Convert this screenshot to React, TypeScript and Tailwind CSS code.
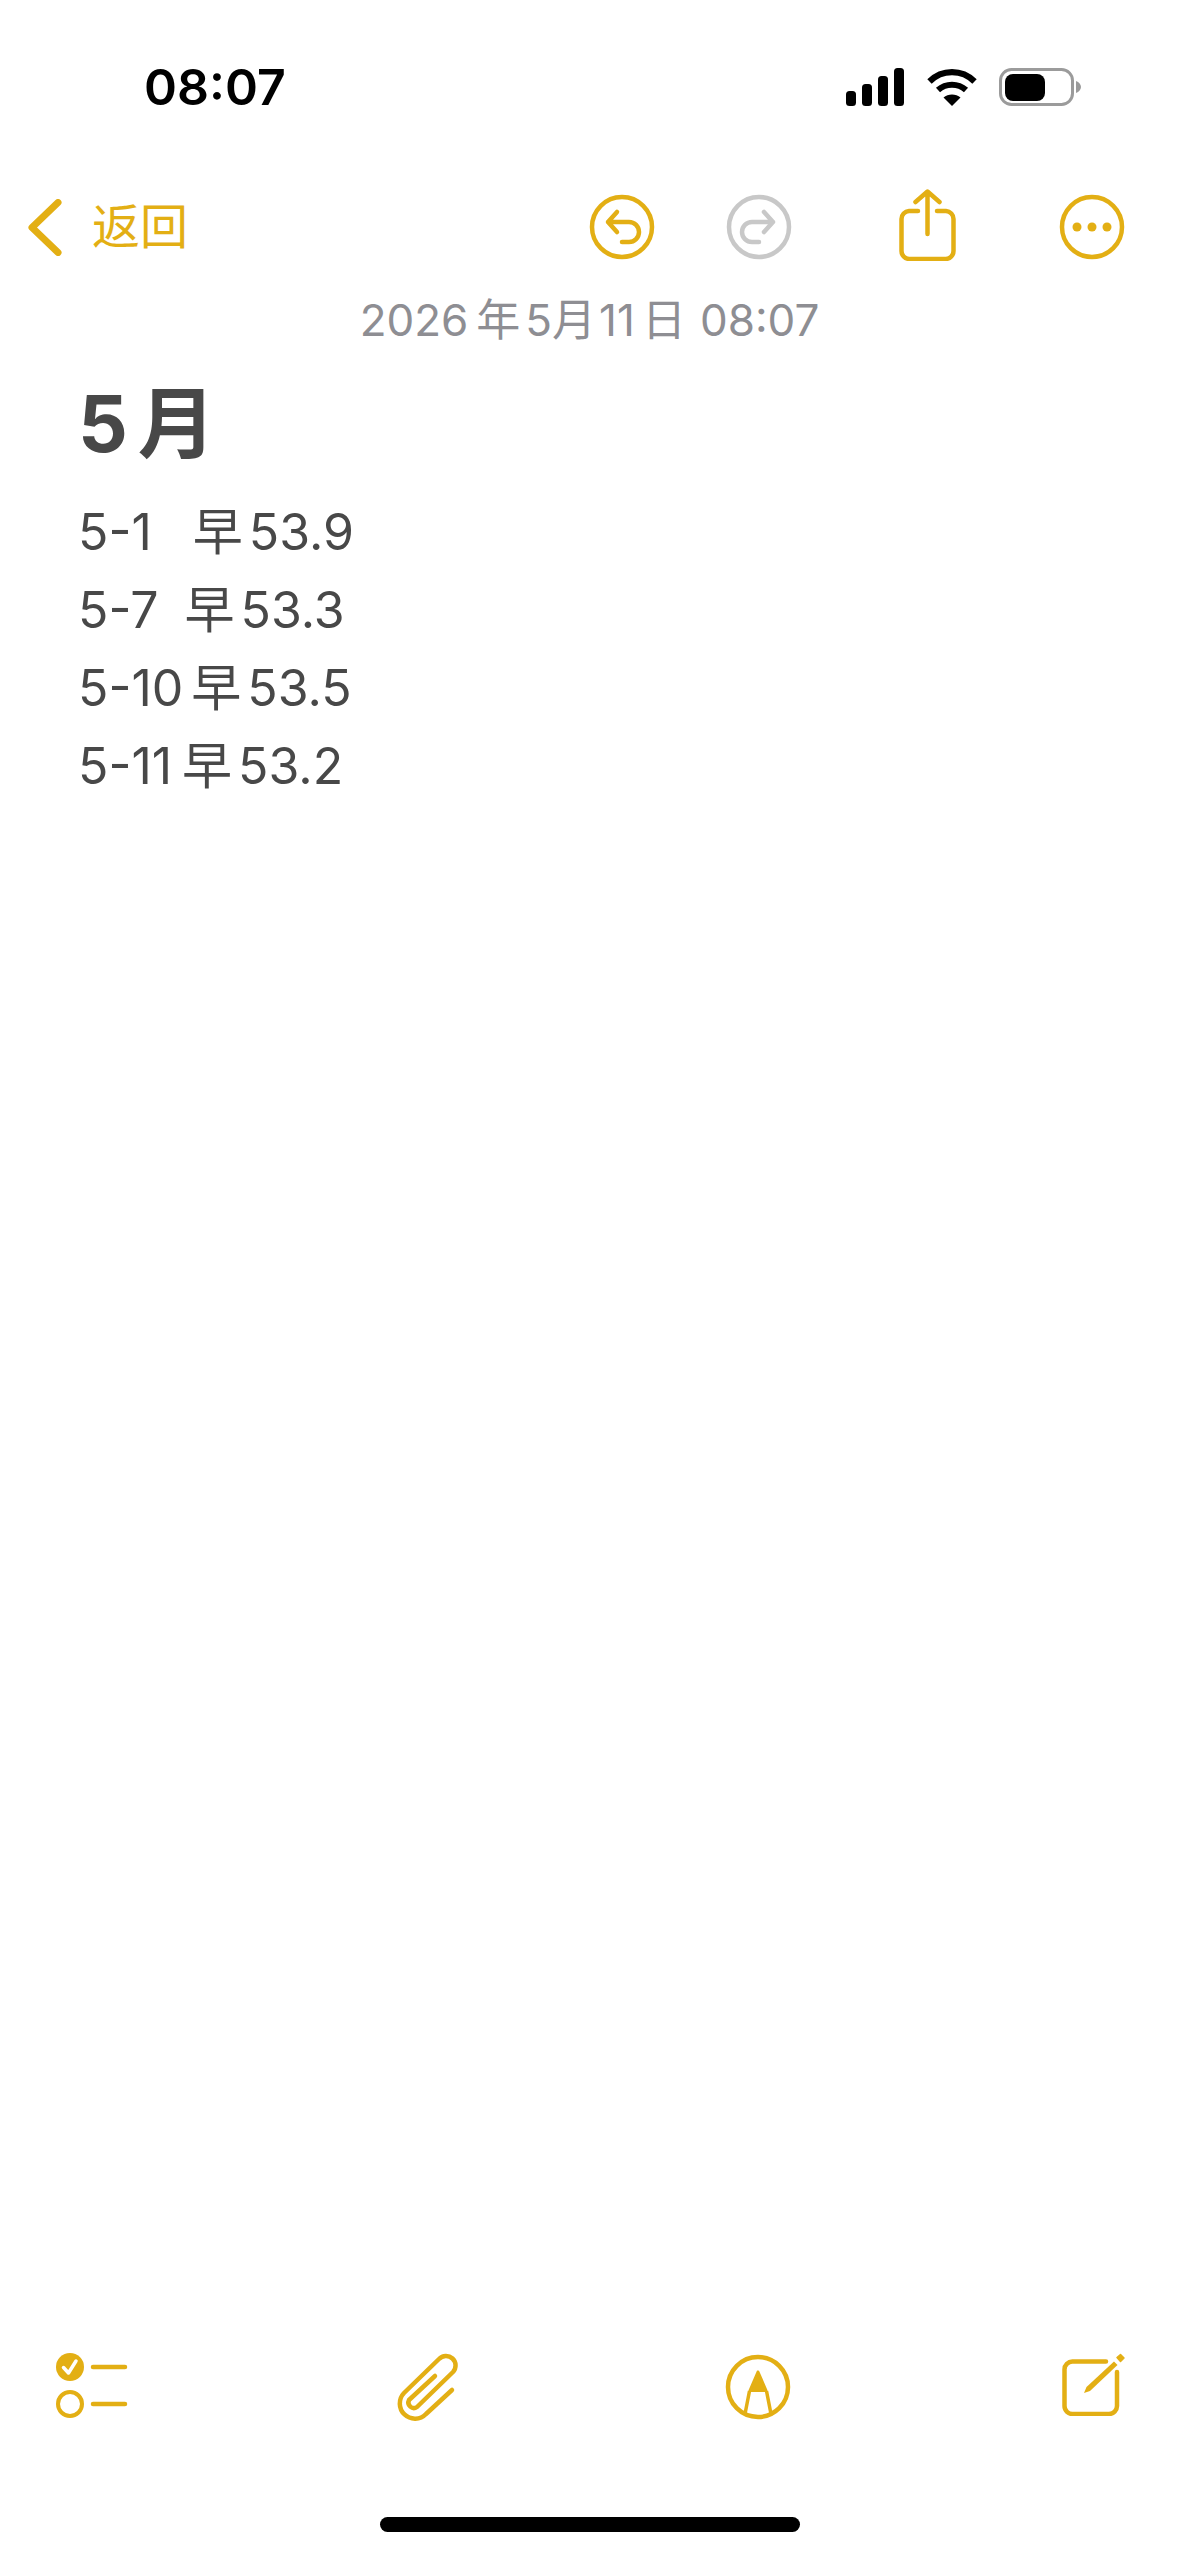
import React from "react";

const gold = "#E3AF14";

function CircleIcon({ color, children }: { color: string; children: React.ReactNode }) {
  return (
    <svg width="66" height="66" viewBox="0 0 66 66" fill="none" stroke={color} strokeWidth="4.5" strokeLinecap="round" strokeLinejoin="round">
      <circle cx="33" cy="33" r="30" />
      {children}
    </svg>
  );
}

function StatusIcons() {
  return (
    <div className="flex items-center">
      <svg width="58" height="38" viewBox="0 0 58 38" fill="#000">
        <rect x="0" y="23" width="10" height="15" rx="3.5" />
        <rect x="16" y="16" width="10" height="22" rx="3.5" />
        <rect x="32" y="8" width="10" height="30" rx="3.5" />
        <rect x="48" y="0" width="10" height="38" rx="3.5" />
      </svg>
      <svg className="ml-[23px]" width="50" height="38" viewBox="0 0 50 38" fill="none" stroke="#000" strokeWidth="6.2">
        <path d="M2.5 13.5C15 1 35 1 47.5 13.5" />
        <path d="M11 22C19 15 31 15 39 22" />
        <path d="M25 38L16.5 29.5C21 25.5 29 25.5 33.5 29.5Z" fill="#000" stroke="none" />
      </svg>
      <svg className="ml-[22px]" width="82" height="38" viewBox="0 0 82 38" fill="none">
        <rect x="1.5" y="1.5" width="72" height="35" rx="11" stroke="#9b9b9b" strokeWidth="3" />
        <rect x="6" y="6" width="40" height="27" rx="8" fill="#000" />
        <path d="M77 13C80 14 82 16.500 82 19C82 21.500 80 24 77 25Z" fill="#9b9b9b" />
      </svg>
    </div>
  );
}

function NoteLine({ date, gap, value }: { date: string; gap: string; value: string }) {
  return (
    <div className="flex h-[78px] items-center">
      <span>{date}</span>
      <span className={gap}>早</span>
      <span className="ml-[6px]">{value}</span>
    </div>
  );
}

export default function App() {
  return (
    <div
      className="flex h-[2556px] w-[1179px] flex-col overflow-hidden bg-white"
      style={{ fontFamily: '"Inter", "Noto Sans CJK SC", sans-serif' }}
    >
      <header className="flex items-center justify-between pl-[144px] pr-[98px] pt-[68px]">
        <span className="text-[50px] font-semibold leading-[38px] text-black">08:07</span>
        <StatusIcons />
      </header>

      <nav className="mt-[83px] flex h-[76px] items-center pl-[28px] pr-[54px]">
        <svg width="34" height="57" viewBox="0 0 34 57" fill="none" stroke={gold} strokeWidth="7" strokeLinecap="round" strokeLinejoin="round">
          <path d="M30 3.500L4 28.500L30 53.500" />
        </svg>
        <span className="ml-[30px] text-[48px] leading-none" style={{ color: gold }}>返回</span>
        <div className="ml-auto flex items-center">
          <CircleIcon color={gold}>
            <path d="M28 18L19 28L28 38M19 28H40A10 10 0 0 1 40 48H33" />
          </CircleIcon>
          <div className="ml-[71px]">
            <CircleIcon color="#C8C8C8">
              <path d="M38 18L47 28L38 38M47 28H26A10 10 0 0 0 26 48H33" />
            </CircleIcon>
          </div>
          <svg className="ml-[107px] -mt-[4px]" width="57" height="72" viewBox="0 0 57 72" fill="none" stroke={gold} strokeWidth="4.500" strokeLinecap="round" strokeLinejoin="round">
            <path d="M19 22H10A8 8 0 0 0 2.500 30V62A8 8 0 0 0 10 70H47A8 8 0 0 0 54.500 62V30A8 8 0 0 0 47 22H38" />
            <path d="M28.500 45V3M16.500 13L28.500 2.500L40.500 13" />
          </svg>
          <div className="ml-[103px]">
            <CircleIcon color={gold}>
              <g fill={gold} stroke="none">
                <circle cx="18" cy="33" r="4.500" />
                <circle cx="33" cy="33" r="4.500" />
                <circle cx="48" cy="33" r="4.500" />
              </g>
            </CircleIcon>
          </div>
        </div>
      </nav>

      <p className="mt-[28px] flex justify-center text-[44px] leading-[54px] text-[#8E8E93]">
        <span>2026</span>
        <span className="ml-[8px]">年</span>
        <span className="ml-[5px]">5</span>
        <span>月</span>
        <span className="ml-[3px]">11</span>
        <span className="ml-[7px]">日</span>
        <span className="ml-[14px]">08:07</span>
      </p>

      <main className="pl-[78px] text-[#484848]">
        <h1 className="mt-[35px] flex h-[84px] items-center text-[78px] font-bold leading-none">
          <span>5</span>
          <span className="ml-[10px]">月</span>
        </h1>
        <div className="mt-[27px] text-[50px] leading-[78px]">
          <NoteLine date="5-1" gap="ml-[41px]" value="53.9" />
          <NoteLine date="5-7" gap="ml-[26px]" value="53.3" />
          <NoteLine date="5-10" gap="ml-[8px]" value="53.5" />
          <NoteLine date="5-11" gap="ml-[10px]" value="53.2" />
        </div>
      </main>

      <footer className="mt-auto flex items-center pl-[56px]">
        <svg className="mt-[8px]" width="72" height="70" viewBox="0 0 72 70" fill="none">
          <circle cx="14" cy="14" r="14" fill={gold} />
          <path d="M7.500 14.500L12.500 20L20 8" stroke="#fff" strokeWidth="3.500" strokeLinecap="round" strokeLinejoin="round" />
          <circle cx="14" cy="51" r="12" stroke={gold} strokeWidth="4" />
          <path d="M37 14H69M37 51H69" stroke={gold} strokeWidth="4.500" strokeLinecap="round" />
        </svg>
        <svg className="ml-[267px] mt-[5px]" width="66" height="72" viewBox="0 0 66 72" fill="none" stroke={gold} strokeWidth="4.500" strokeLinecap="round" strokeLinejoin="round">
          <path d="M57 39L31 63A15 15 0 0 1 9 42L44 8A9.500 9.500 0 0 1 58 21L22 56A5.500 5.500 0 0 1 14 49L40 25" />
        </svg>
        <svg className="ml-[264px] mt-[5px]" width="66" height="66" viewBox="0 0 66 66" fill="none" stroke={gold} strokeWidth="4.500" strokeLinejoin="round">
          <circle cx="33" cy="33" r="30" />
          <path d="M33 18L25 36.500H41Z" fill={gold} strokeWidth="3" />
          <path d="M24.500 37L20 60M41.500 37L46 60" strokeWidth="3.500" />
        </svg>
        <svg className="ml-[271px]" width="64" height="64" viewBox="0 0 64 64" fill="none">
          <path d="M44 9.500H11A8 8 0 0 0 2.500 18V54A8 8 0 0 0 11 62H47A8 8 0 0 0 55 54V20" stroke={gold} strokeWidth="4.500" strokeLinecap="round" />
          <path d="M22 41L24.500 35L52 9.500L55.500 13L28 39Z" fill={gold} />
          <path d="M55 5.500L58.500 2.500L62 6L58.500 9.500Z" fill={gold} stroke={gold} strokeWidth="1.500" strokeLinejoin="round" />
        </svg>
      </footer>

      <div className="mb-[24px] mt-[94px] flex justify-center">
        <div className="h-[15px] w-[420px] rounded-full bg-black" />
      </div>
    </div>
  );
}
